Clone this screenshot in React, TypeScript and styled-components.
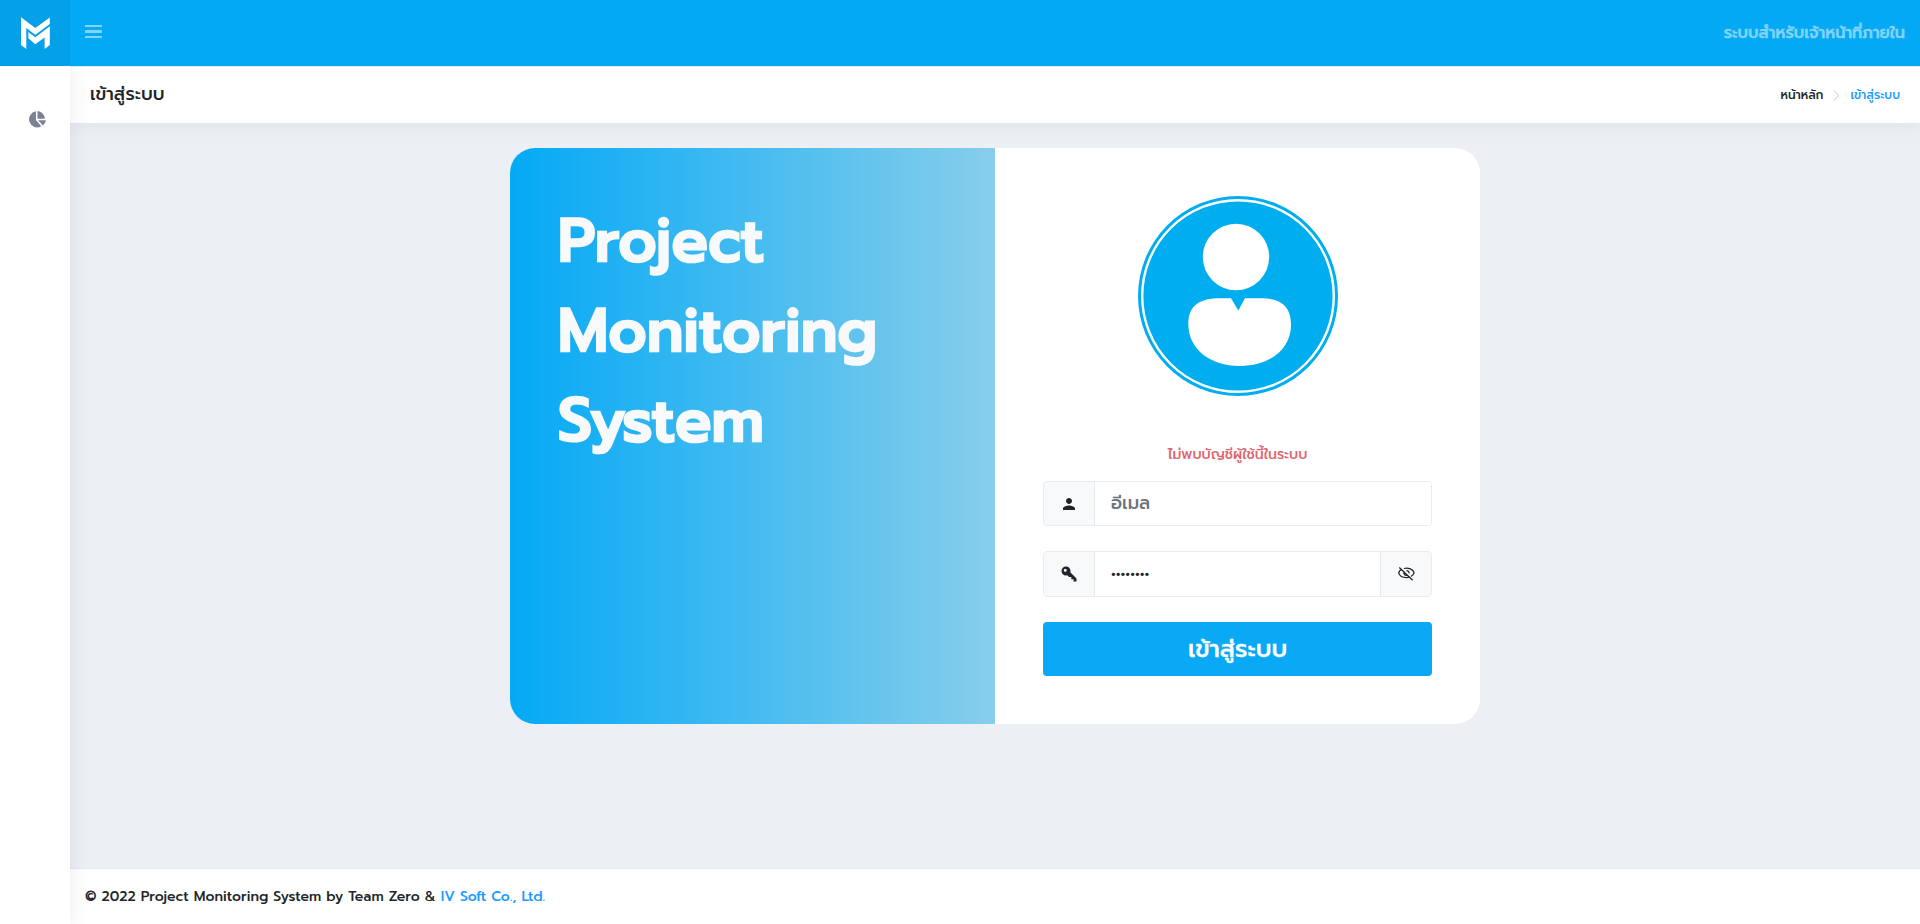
import React from 'react';
import styled, { createGlobalStyle } from 'styled-components';
import { MdPerson } from 'react-icons/md';

const Global = createGlobalStyle`
  * { box-sizing: border-box; }
  body {
    margin: 0;
    background: #ecf0f5;
    color: #212529;
    font-family: Prompt, Inter, "Noto Sans Thai", "Noto Sans", sans-serif;
    font-size: 14px;
    font-weight: 500;
  }
  a { text-decoration: none; }
`;

const Page = styled.div`
  display: flex;
  flex-direction: column;
  height: 924px;
  overflow: hidden;
`;

const TopBar = styled.header`
  z-index: 3;
  display: flex;
  align-items: center;
  height: 66px;
  flex: none;
  background: #04a9f5;
`;

const Brand = styled.a`
  display: flex;
  align-items: center;
  justify-content: center;
  width: 70px;
  height: 66px;
  background: #04a0e8;
`;

const MenuButton = styled.button`
  display: flex;
  flex-direction: column;
  gap: 3px;
  width: 17px;
  margin: -3px 0 0 15px;
  padding: 0;
  border: 0;
  background: none;
  span { height: 2.4px; border-radius: 0.5px; background: #85d4fa; }
`;

const SystemName = styled.span`
  margin: 0 15px 0 auto;
  color: #82d4fa;
  font-size: 16px;
  -webkit-text-stroke: 0.5px #82d4fa;
`;

const Body = styled.div`
  display: flex;
  flex: 1;
  min-height: 0;
`;

const Sidebar = styled.nav`
  z-index: 2;
  display: flex;
  justify-content: center;
  width: 70px;
  padding: 45px 0 0 4px;
  background: #fff;
  box-shadow: 1px 0 20px rgba(0, 0, 0, 0.08);
`;

const Main = styled.main`
  display: flex;
  flex: 1;
  flex-direction: column;
`;

const TitleBar = styled.div`
  z-index: 1;
  display: flex;
  align-items: center;
  justify-content: space-between;
  height: 57px;
  padding: 0 20px;
  border-top: 1px solid #e3e8ec;
  background: #fff;
  box-shadow: 1px 0 20px rgba(0, 0, 0, 0.08);
`;

const PageTitle = styled.h1`
  margin: 0 0 2px;
  font-size: 18px;
  font-weight: 500;
`;

const Crumbs = styled.div`
  display: flex;
  align-items: center;
  gap: 10px;
  font-size: 12px;
  a { color: #1a9bfc; }
`;

const Content = styled.section`
  display: flex;
  flex: 1;
  justify-content: center;
  align-items: flex-start;
  padding-top: 25px;
`;

const Card = styled.div`
  display: flex;
  width: 970px;
  height: 576px;
  overflow: hidden;
  border-radius: 25px;
  background: #fff;
`;

const Banner = styled.div`
  width: 485px;
  padding: 48px;
  background: linear-gradient(to right, #04a9f5, skyblue);
`;

const BannerTitle = styled.h2`
  margin: 0;
  color: #f8f9fa;
  font-size: 60px;
  font-weight: 500;
  line-height: 90px;
  -webkit-text-stroke: 2.7px #f8f9fa;
`;

const Line = styled.span`
  display: block;
`;

const Form = styled.form`
  display: flex;
  flex-direction: column;
  align-items: center;
  width: 485px;
  padding: 48px;
`;

const ErrorText = styled.p`
  height: 21px;
  margin: 48px 0 16px;
  color: #e06470;
  font-size: 14px;
  line-height: 21px;
`;

const Group = styled.div<{ $height: number }>`
  display: flex;
  flex: none;
  width: 389px;
  height: ${(p) => p.$height}px;
  margin-bottom: 25px;
  overflow: hidden;
  border: 1px solid #e9ecef;
  border-radius: 4px;
`;

const Addon = styled.span<{ $end?: boolean }>`
  display: flex;
  align-items: center;
  justify-content: center;
  width: 51px;
  background: #f8f9fb;
  border: 0 solid #e5e9ee;
  border-width: ${(p) => (p.$end ? '0 0 0 1px' : '0 1px 0 0')};
`;

const Field = styled.input`
  flex: 1;
  min-width: 0;
  padding: 0 16px 2px;
  border: 0;
  outline: 0;
  background: #fff;
  color: #212529;
  font-family: inherit;
  font-size: 18px;
  font-weight: 500;
  &::placeholder { color: #6c757d; opacity: 1; }
  &[type='password'] { padding-bottom: 0; }
`;

const Submit = styled.button`
  width: 389px;
  height: 54px;
  padding: 0;
  border: 0;
  border-radius: 4px;
  background: #09a9f5;
  color: #fff;
  font-family: inherit;
  font-size: 24px;
  font-weight: 500;
  -webkit-text-stroke: 0.3px #fff;
`;

const Footer = styled.footer`
  height: 56px;
  padding: 0 15px;
  border-top: 1px solid #e6eaee;
  background: #fff;
  color: #212529;
  line-height: 56px;
  a { color: #1a9bfc; }
`;

const Logo = () => (
  <svg width="29" height="32" viewBox="0 0 29 32" fill="#fff">
    <path d="M0 .3 L14.3 11 L28.8 .5 V7 L14.3 17.7 L5.3 11 V32 L0 28 Z" />
    <path d="M7.3 15 L14.3 20.3 L28.8 9.3 V28 L23.6 32 V20.5 L14.3 27.3 L7.3 21.3 Z" />
  </svg>
);

const Avatar = () => (
  <svg width="200" height="200" viewBox="0 0 200 200">
    <circle cx="100" cy="100" r="100" fill="#00aeef" />
    <circle cx="100" cy="100" r="95.8" fill="none" stroke="#fff" strokeWidth="2.4" />
    <circle cx="98" cy="61" r="33.2" fill="#fff" />
    <path
      d="M93 102.2 L100.3 114.5 L107 102.2 H122 C142 102.2 153 109 153 129 C153 153 132 170 102 170 C72 170 50.3 153 50.3 128 C50.3 109 62 102.2 82 102.2 Z"
      fill="#fff"
    />
  </svg>
);

const PieIcon = () => (
  <svg width="18" height="17" viewBox="0 0 17 16" fill="#7c8195">
    <path d="M7.5 .3 V8.4 L12.6 14.3 A7.6 7.6 0 1 1 7.5 .3 Z" />
    <path d="M9 0 A7.6 7.6 0 0 1 16 7.2 H9 Z" />
    <path d="M9.6 8.8 H17 A7.6 7.6 0 0 1 14 13.6 Z" />
  </svg>
);

const KeyIcon = () => (
  <svg width="18" height="18" viewBox="0 0 24 24" fill="#212529">
    <path d="M22 18V22H18V19H15V16H12L9.74 13.74C9.19 13.91 8.61 14 8 14A6 6 0 0 1 2 8A6 6 0 0 1 8 2A6 6 0 0 1 14 8C14 8.61 13.91 9.19 13.74 9.74L22 18M7 5A2 2 0 0 0 5 7A2 2 0 0 0 7 9A2 2 0 0 0 9 7A2 2 0 0 0 7 5Z" />
  </svg>
);

const EyeOffIcon = () => (
  <svg width="17" height="14" viewBox="0 0 17 14" fill="none" stroke="#212529" strokeWidth="1.25">
    <path d="M4 2.3 C2.2 3.1 .8 4.6 .7 6.1 C1.6 8.8 4.8 10.6 8.4 10.6 C9.6 10.6 10.5 10.5 11.4 10.2 M5.9 1.5 C10.6 .3 15.2 2.3 16.1 5.9 C15.7 7.4 14.5 8.7 12.9 9.5" />
    <path d="M5.9 5 C5.5 7.2 6.9 8.7 9 8.3 M8.5 3.6 C10.2 3.6 11.2 4.8 11 6.4 M1.3 .5 L14.6 13.2" />
  </svg>
);

const Chevron = () => (
  <svg width="7" height="11" viewBox="0 0 7 11" fill="none" stroke="#c3cad1">
    <path d="M.8 .5 L6 5.5 L.8 10.5" />
  </svg>
);

export default function App() {
  return (
    <Page>
      <Global />
      <TopBar>
        <Brand><Logo /></Brand>
        <MenuButton aria-label="menu"><span /><span /><span /></MenuButton>
        <SystemName>ระบบสำหรับเจ้าหน้าที่ภายใน</SystemName>
      </TopBar>
      <Body>
        <Sidebar><PieIcon /></Sidebar>
        <Main>
          <TitleBar>
            <PageTitle>เข้าสู่ระบบ</PageTitle>
            <Crumbs><span>หน้าหลัก</span><Chevron /><a>เข้าสู่ระบบ</a></Crumbs>
          </TitleBar>
          <Content>
            <Card>
              <Banner>
                <BannerTitle>
                  <Line>Project</Line>
                  <Line>Monitoring</Line>
                  <Line>System</Line>
                </BannerTitle>
              </Banner>
              <Form>
                <Avatar />
                <ErrorText>ไม่พบบัญชีผู้ใช้นี้ในระบบ</ErrorText>
                <Group $height={45}>
                  <Addon><MdPerson size={18} /></Addon>
                  <Field placeholder="อีเมล" />
                </Group>
                <Group $height={46}>
                  <Addon><KeyIcon /></Addon>
                  <Field type="password" defaultValue="password" />
                  <Addon $end><EyeOffIcon /></Addon>
                </Group>
                <Submit type="button">เข้าสู่ระบบ</Submit>
              </Form>
            </Card>
          </Content>
          <Footer>© 2022 Project Monitoring System by Team Zero &amp; <a>IV Soft Co., Ltd.</a></Footer>
        </Main>
      </Body>
    </Page>
  );
}
